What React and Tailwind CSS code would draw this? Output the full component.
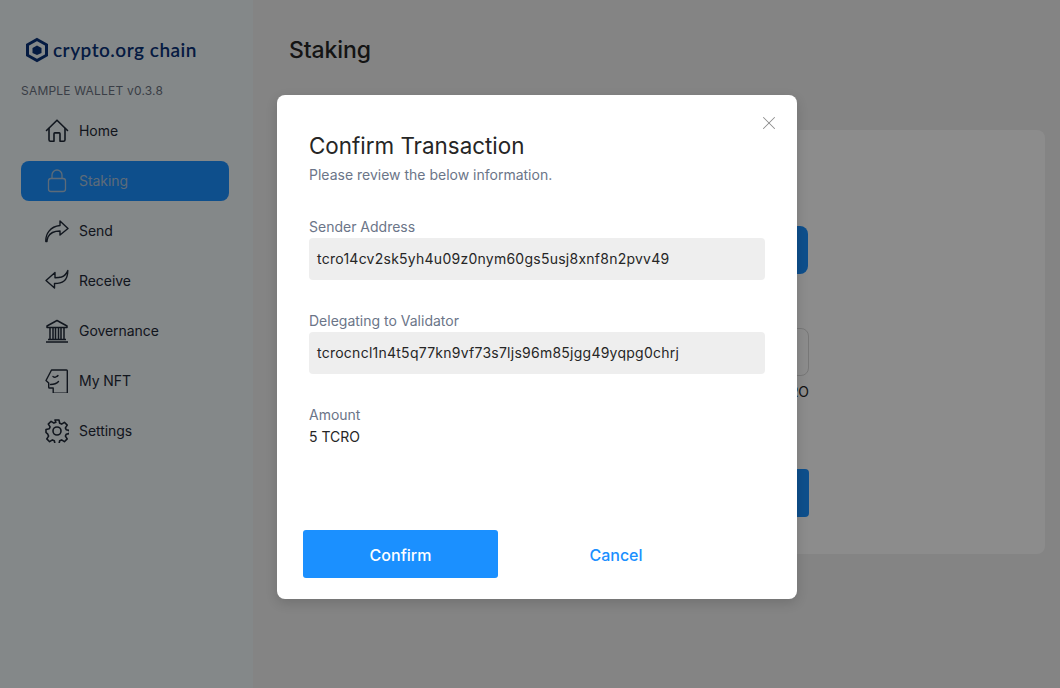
import { X } from "lucide-react";

const icon = "w-6 h-6 shrink-0 fill-none stroke-current";

const HomeIcon = () => (
  <svg viewBox="0 0 24 24" className={icon} strokeWidth="1.6" strokeLinejoin="round" strokeLinecap="round">
    <path d="M1.500 11.500 12 1.200l10.500 10.300" />
    <path d="M4 9.500v11.200c0 .9.6 1.500 1.500 1.500H9v-7.500c0-.5.3-.8.8-.8h4.400c.5 0 .8.3.8.8v7.500h3.500c.9 0 1.500-.6 1.500-1.500V9.500" />
  </svg>
);

const LockIcon = () => (
  <svg viewBox="0 0 24 24" className={icon} strokeWidth="1.3">
    <rect x="3.500" y="9.500" width="17" height="13" rx="2.500" />
    <path d="M7 9.500V6a5 5 0 0 1 10 0v3.500" />
  </svg>
);

const SendIcon = () => (
  <svg viewBox="0 0 24 24" className={icon} strokeWidth="1.4" strokeLinejoin="round" strokeLinecap="round">
    <path d="M15 2l8 7.500-8 6.500v-4c-5 0-10 2-12 6-.5 1.500-1 3-1 4.500H.8C.5 15 5 7.500 15 6.500z" />
  </svg>
);

const ReceiveIcon = () => (
  <svg viewBox="0 0 24 24" className={icon} strokeWidth="1.4" strokeLinejoin="round" strokeLinecap="round">
    <path d="M10 3.500 1 11.500l8.500 7.500v-4.500c4 0 7-.5 9.500-2.500 2.500-2 3.800-5 3.800-10.500-1.300 3.500-3.300 5.500-6.300 6.500-2 .6-4 .7-6.500.7z" />
  </svg>
);

const BankIcon = () => (
  <svg viewBox="0 0 24 24" className={icon} strokeWidth="1.5">
    <path d="M12 1.500 22 7v1.500H2V7z" strokeLinejoin="round" />
    <path d="M5 9v11M8 9v11M10.500 9v11M13.500 9v11M16 9v11M19 9v11" />
    <path d="M3 20.500h18M1 23h22" />
  </svg>
);

const NftIcon = () => (
  <svg viewBox="0 0 24 24" className={icon} strokeWidth="1.4" strokeLinejoin="round" strokeLinecap="round">
    <path d="M6.500 1h15c.5 0 .8.3.8.8v21.700c0 .5-.3.8-.8.8H9c-.5 0-.8-.3-.8-.8V19H4.500c-.5 0-.8-.3-.8-.8V14L1 11.500z" />
    <path d="M8 7.500c1 .8 2.500.8 3.500 0M13 6.500c-.5.7-1 1-1.500 1M5.500 15.500c3 0 6-.8 8-3" />
  </svg>
);

const GearIcon = () => (
  <svg viewBox="0 0 24 24" className={icon} strokeWidth="1.6" strokeLinejoin="round">
    <circle cx="12" cy="12" r="4" />
    <path d="M10 1h4l.7 3.300 1.900.8 2.800-1.800 2.800 2.800-1.800 2.800.8 1.900 3.300.7v3l-3.300.7-.8 1.900 1.800 2.800-2.800 2.800-2.800-1.800-1.900.8-.7 3.300h-4l-.7-3.300-1.900-.8-2.800 1.800-2.800-2.800 1.800-2.800-.8-1.900L1 13.500v-3l3.300-.7.8-1.900-1.800-2.800 2.800-2.800 2.800 1.800 1.900-.8z" />
  </svg>
);

const navItems = [
  { label: "Home", Icon: HomeIcon },
  { label: "Staking", Icon: LockIcon, active: true },
  { label: "Send", Icon: SendIcon },
  { label: "Receive", Icon: ReceiveIcon },
  { label: "Governance", Icon: BankIcon },
  { label: "My NFT", Icon: NftIcon },
  { label: "Settings", Icon: GearIcon },
];

function Sidebar() {
  return (
    <aside className="w-[253px] shrink-0 bg-[#f0f7f9] pl-[21px] pr-6 pt-[38px]">
      <div className="flex items-center gap-1 pl-[4px] h-6">
        <svg viewBox="0 0 24 24" className="w-[24px] h-[26px] shrink-0">
          <path d="M12 1.500 21.500 6.800v10.400L12 22.500l-9.500-5.300V6.800z" fill="none" stroke="#0a3278" strokeWidth="3" />
          <path d="M12 7.500l4.500 2.500v5L12 17l-4.500-2v-5z" fill="#0a3278" />
        </svg>
        <span className="font-['Lato',sans-serif] text-[19px] font-semibold tracking-[0.5px] text-[#0a3278]">
          crypto.org chain
        </span>
      </div>
      <div className="mt-[19px] text-xs leading-5 text-[#6b7280] tracking-[0.2px]">SAMPLE WALLET v0.3.8</div>
      <nav className="mt-[10px] flex flex-col gap-[10px] w-[208px]">
        {navItems.map(({ label, Icon, active }) => (
          <div
            key={label}
            className={`flex items-center h-10 pl-6 gap-[10px] rounded-lg text-sm tracking-[-0.05px] ${
              active ? "bg-[#1b90ff] text-[#a9c4dc]" : "text-[#1f2937]"
            }`}
          >
            <Icon />
            <span>{label}</span>
          </div>
        ))}
      </nav>
    </aside>
  );
}

function StakingPage() {
  return (
    <main className="flex-1 min-w-0 pl-[36px] pr-[15px]">
      <h1 className="mt-[33px] text-[23px] leading-[34px] font-medium tracking-[-0.1px] text-[#262626]">Staking</h1>
      <section className="mt-[63px] h-[424px] rounded-lg bg-white pl-[21px] pt-[96px]">
        <div className="w-[499px] flex flex-col">
          <div className="h-12 rounded-lg bg-[#1b90ff] w-[498px]" />
          <div className="mt-[54px] h-12 rounded-lg border border-[#d9d9d9]" />
          <div className="mt-[7px] text-right text-sm leading-[17px] text-[#262626]">TCRO</div>
          <div className="mt-[69px] h-12 rounded bg-[#1b90ff]" />
        </div>
      </section>
    </main>
  );
}

function Field({ label, value }) {
  return (
    <div>
      <div className="text-sm leading-5 text-[#6b7588]">{label}</div>
      <div className="mt-px h-[42px] flex items-center rounded bg-[#eeeeee] px-2 text-sm text-[#262626] tracking-[0.25px]">
        {value}
      </div>
    </div>
  );
}

function ConfirmModal() {
  return (
    <div className="absolute inset-0 bg-black/45">
      <div className="absolute left-[277px] top-[95px] w-[520px] h-[504px] rounded-lg bg-white shadow-[0_4px_12px_rgba(0,0,0,0.15)] px-8 pt-[35px]">
        <X className="absolute right-[17px] top-[17px] w-[22px] h-[22px] text-[#8c8c8c]" strokeWidth={1.1} />
        <h2 className="text-[22.4px] leading-[32px] text-[#262626]">Confirm Transaction</h2>
        <p className="text-sm leading-[14px] mt-[6px] text-[#6b7588]">Please review the below information.</p>
        <div className="mt-[35px] flex flex-col gap-[31px]">
          <Field label="Sender Address" value="tcro14cv2sk5yh4u09z0nym60gs5usj8xnf8n2pvv49" />
          <Field label="Delegating to Validator" value="tcrocncl1n4t5q77kn9vf73s7ljs96m85jgg49yqpg0chrj" />
          <div>
            <div className="text-sm leading-5 text-[#6b7588]">Amount</div>
            <div className="mt-px text-sm leading-[22px] text-[#262626]">5 TCRO</div>
          </div>
        </div>
        <div className="-ml-[6px] mt-[82px] flex items-center">
          <button className="w-[195px] h-12 pt-px rounded-[3px] bg-[#1b90ff] text-white text-base font-medium">Confirm</button>
          <button className="ml-[10px] w-[216px] h-12 pt-px text-[#1b90ff] text-base font-medium">Cancel</button>
        </div>
      </div>
    </div>
  );
}

export default function App() {
  return (
    <div className="relative flex h-[688px] w-[1060px] overflow-hidden bg-[#f0f0f0] font-['Inter',sans-serif]">
      <Sidebar />
      <StakingPage />
      <ConfirmModal />
    </div>
  );
}
